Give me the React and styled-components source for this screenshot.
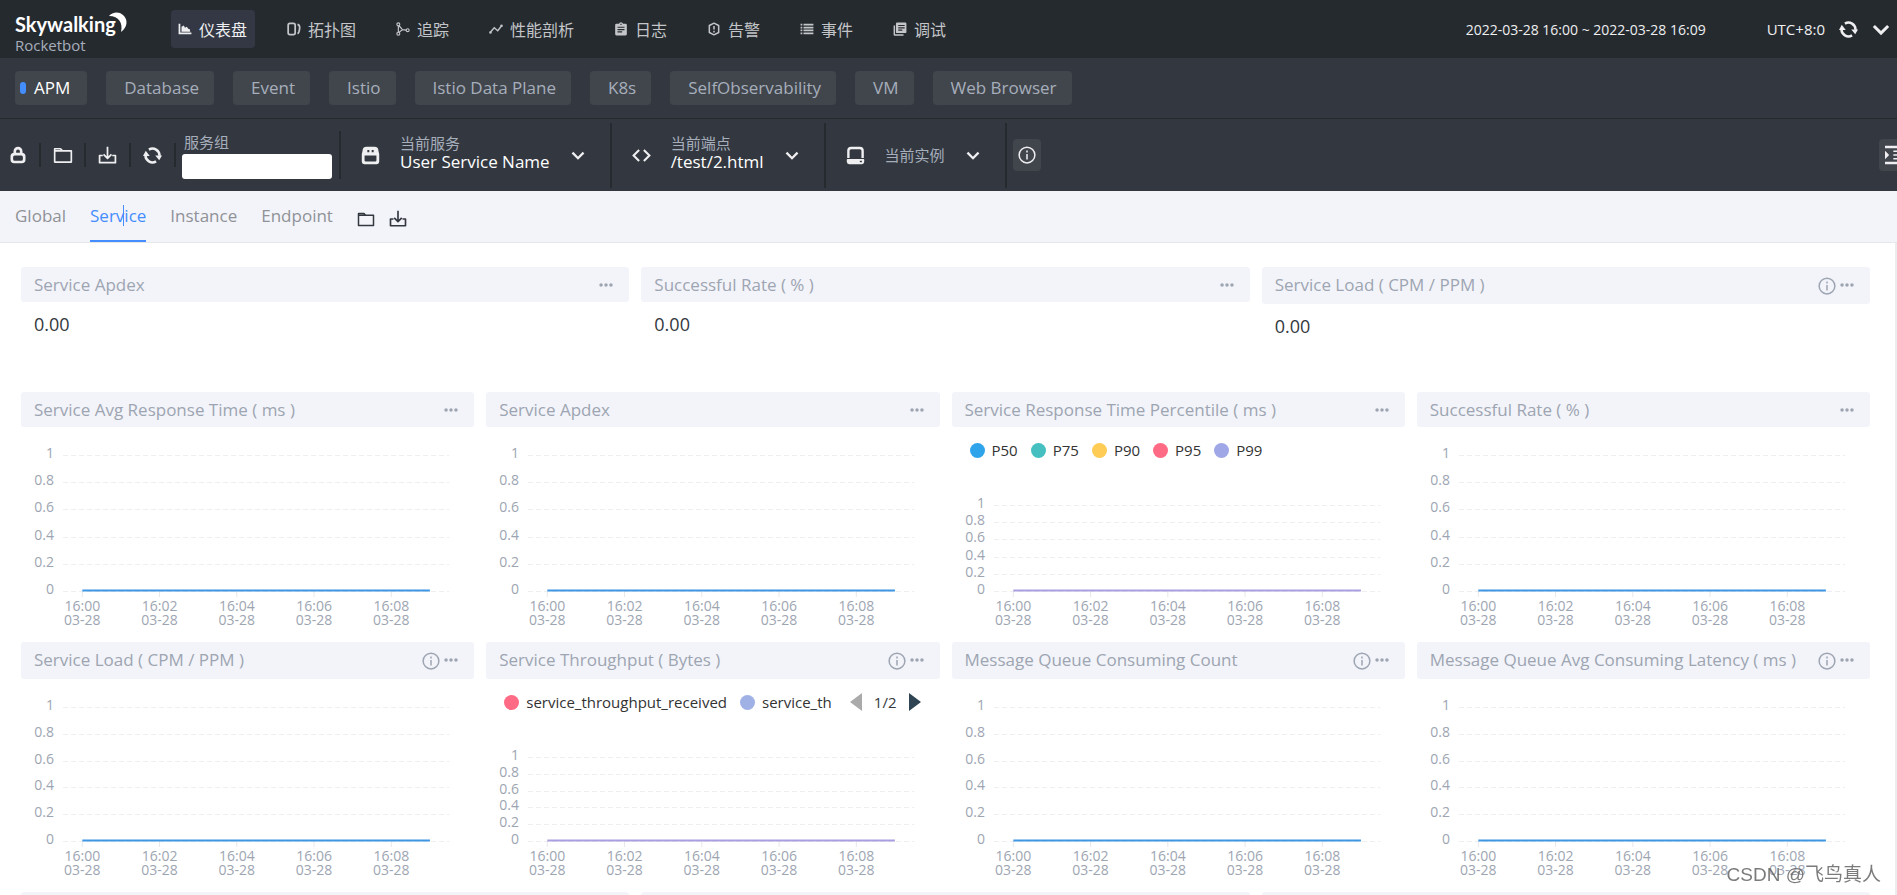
import React, { useState } from 'react'
import styled, { createGlobalStyle, css } from 'styled-components'

const GlobalStyle = createGlobalStyle`
  * {
    box-sizing: border-box;
  }

  body {
    margin: 0;
    background: #fff;
    color: #333840;
    font-family: 'Open Sans', 'Noto Sans CJK SC', sans-serif;
    font-size: 15px;
  }

  button,
  input {
    font: inherit;
    color: inherit;
    border: 0;
    padding: 0;
    background: none;
  }

  button {
    cursor: pointer;
  }

  svg {
    display: block;
    flex: none;
  }
`

/* ---------- icons ---------- */

const iconPaths = {
  chart: (
    <path d="M1 3h3v15h19v3H1zM6 8l4-2 2 4 3-2 3 4 2 0 1 4.500H6z" fill="currentColor" />
  ),
  topology: (
    <g fill="none" stroke="currentColor" strokeWidth="3">
      <rect x="2" y="2.500" width="12" height="19" rx="3" />
      <path d="M18 4c4 1 4 5 3.500 8-.3 4-1 7-3.500 8" />
    </g>
  ),
  trace: (
    <g fill="none" stroke="currentColor" strokeWidth="2">
      <circle cx="4" cy="4" r="2.500" />
      <circle cx="4" cy="20" r="2.500" />
      <circle cx="20" cy="14" r="2.500" />
      <path d="M4 6.500v11M5 6l6 7 6.500 1M5 18l6-5" />
    </g>
  ),
  profile: (
    <g fill="none" stroke="currentColor" strokeWidth="2.400">
      <path d="m2 18 7-8 6 5 7-9" />
      <circle cx="2.500" cy="18" r="1" />
      <circle cx="21.500" cy="6.500" r="1" />
    </g>
  ),
  log: (
    <path
      fillRule="evenodd"
      fill="currentColor"
      d="M4 3h4.500a3.600 3.600 0 0 1 7 0H20a2 2 0 0 1 2 2v16a2 2 0 0 1-2 2H4a2 2 0 0 1-2-2V5a2 2 0 0 1 2-2zm2 5v2h12V8zm0 4v2h12v-2zm0 4v2h8v-2zM11 3v2h2V3z"
    />
  ),
  alarm: (
    <g fill="none" stroke="currentColor" strokeWidth="2.600">
      <path d="m12 2 8 4v12l-8 4-8-4V6z" strokeLinejoin="round" />
      <path d="M12 7v6M12 15v3" />
    </g>
  ),
  event: (
    <path
      fill="currentColor"
      d="M1 3h3v3H1zm5 0h17v3H6zM1 8h3v3H1zm5 0h17v3H6zM1 13h3v3H1zm5 0h17v3H6zM1 18h3v3H1zm5 0h17v3H6z"
    />
  ),
  debug: (
    <path
      fillRule="evenodd"
      fill="currentColor"
      d="M1 6h2.500v15H18v2.500H3a2 2 0 0 1-2-2zM7 1h14a2 2 0 0 1 2 2v14a2 2 0 0 1-2 2H7a2 2 0 0 1-2-2V3a2 2 0 0 1 2-2zm2 4v2h11V5zm0 4v2h11V9zm0 4v2h7v-2z"
    />
  ),
  lock: (
    <path
      fillRule="evenodd"
      fill="currentColor"
      d="M12 1a6 6 0 0 1 6 6v2a5 5 0 0 1 4 5v4a5 5 0 0 1-5 5H7a5 5 0 0 1-5-5v-4a5 5 0 0 1 4-5V7a6 6 0 0 1 6-6zm0 3.500A2.500 2.500 0 0 0 9.500 7v2h5V7A2.500 2.500 0 0 0 12 4.500zM7.500 12.500A2 2 0 0 0 5.500 14.500v3a2 2 0 0 0 2 2h9a2 2 0 0 0 2-2v-3a2 2 0 0 0-2-2z"
    />
  ),
  folder: (
    <path
      d="M2 4.500h7l2.500 2.500H22v13.500H2zM2 7h10"
      fill="none"
      stroke="currentColor"
      strokeWidth="2"
      strokeLinejoin="round"
    />
  ),
  download: (
    <path
      d="M6 12H2v9h20v-9h-4M12 1v14M7 10.500l5 5 5-5"
      fill="none"
      stroke="currentColor"
      strokeWidth="2.200"
      strokeLinejoin="round"
    />
  ),
  refresh: (
    <g>
      <g fill="none" stroke="currentColor" strokeWidth="3.200">
        <path d="M7.500 4.500a8.800 8.800 0 0 1 13.300 8" />
        <path d="M16.500 19.500a8.800 8.800 0 0 1-13.300-8" />
      </g>
      <path d="M15.500 12h8.500l-3.500 6zM0 12.500h8.500L3.500 6z" fill="currentColor" />
    </g>
  ),
  chevron: (
    <path d="m2.500 8 9.500 9.500L21.500 8" fill="none" stroke="currentColor" strokeWidth="4" />
  ),
  service: (
    <path
      fillRule="evenodd"
      fill="currentColor"
      d="M7 1h10a5 5 0 0 1 5 5l1 4v10a3 3 0 0 1-3 3H4a3 3 0 0 1-3-3V10l1-4a5 5 0 0 1 5-5zm1 4v3h2.500V5zm5.500 0v3H16V5zM4.500 12v6a1.500 1.500 0 0 0 1.500 1.500h12a1.500 1.500 0 0 0 1.500-1.500v-6z"
    />
  ),
  code: (
    <path
      d="M9 5l-7 7 7 7M15 5l7 7-7 7"
      fill="none"
      stroke="currentColor"
      strokeWidth="2.600"
    />
  ),
  device: (
    <g>
      <path
        d="M3 15V6a3.500 3.500 0 0 1 3.500-3.500h11A3.500 3.500 0 0 1 21 6v9"
        fill="none"
        stroke="currentColor"
        strokeWidth="3"
      />
      <path
        fillRule="evenodd"
        fill="currentColor"
        d="M2 16.500h20a1 1 0 0 1 1 1V20a3 3 0 0 1-3 3H4a3 3 0 0 1-3-3v-2.500a1 1 0 0 1 1-1zM17.500 18.500v2H20v-2z"
      />
    </g>
  ),
  info: (
    <g>
      <circle cx="12" cy="12" r="10.500" fill="none" stroke="currentColor" strokeWidth="2" />
      <path d="M11 6h2v2.500h-2zm0 4.500h2V18h-2z" fill="currentColor" />
    </g>
  ),
  indent: (
    <path
      fill="currentColor"
      d="M0 1h24v3H0zm0 19h24v3H0zM0 7l5 5-5 5zM10 6.500h14v2H10zm0 4.500h14v2H10zm0 4.500h14v2H10z"
    />
  ),
  more: (
    <g fill="currentColor">
      <circle cx="3.500" cy="12" r="3" />
      <circle cx="12" cy="12" r="3" />
      <circle cx="20.500" cy="12" r="3" />
    </g>
  ),
}

function Icon({ name, size = 18 }) {
  return (
    <svg width={size} height={size} viewBox="0 0 24 24" aria-hidden="true">
      {iconPaths[name]}
    </svg>
  )
}

/* ---------- layout ---------- */

const Page = styled.div`
  height: 100vh;
  display: flex;
  flex-direction: column;
  overflow: hidden;
`

const Header = styled.header`
  flex: none;
  display: flex;
  align-items: center;
  height: 58px;
  padding: 0 7px 0 15px;
  background: #252a2f;
  color: #efeff1;
`

const Logo = styled.a`
  display: block;
  width: 156px;
  color: #fff;
  text-decoration: none;
`

const Product = styled.div`
  font-size: 15px;
  line-height: 16px;
  color: #a7aebb;
`

const Nav = styled.nav`
  display: flex;
  gap: 25px;
`

const NavItem = styled.a`
  display: flex;
  align-items: center;
  gap: 7px;
  height: 38px;
  padding: 0 8px 0 7px;
  border-radius: 4px;
  font-size: 16px;
  text-decoration: none;
  color: ${({ $active }) => ($active ? '#efeff1' : '#c3c5c8')};
  background: ${({ $active }) => ($active ? '#333844' : 'none')};
`

const HeaderTools = styled.div`
  display: flex;
  align-items: center;
  margin-left: auto;
  font-size: 15px;
  white-space: nowrap;
`

const DateRange = styled.button`
  margin-right: 61px;
  font-size: 14px;
`

const HeaderButton = styled.button`
  display: flex;
  margin-left: 14px;
`

const Categories = styled.div`
  flex: none;
  display: flex;
  align-items: center;
  gap: 19px;
  height: 61px;
  padding: 0 15px;
  background: #333840;
  border-bottom: 1px solid #252a2f;
`

const Category = styled.button`
  display: flex;
  align-items: center;
  height: 34px;
  padding: ${({ $active }) => ($active ? '0 17px 0 5px' : '0 15px 0 18px')};
  border-radius: 4px;
  font-size: 17px;
  line-height: 22px;
  white-space: nowrap;
  color: ${({ $active }) => ($active ? '#fff' : '#a7aebb')};
  background: #41464d;

  ${({ $active }) =>
    $active &&
    css`
      &::before {
        content: '';
        width: 6px;
        height: 12px;
        margin-right: 8px;
        border-radius: 3px;
        background: #448dfe;
      }
    `}
`

const Toolbar = styled.div`
  flex: none;
  display: flex;
  align-items: center;
  height: 72px;
  overflow: hidden;
  background: #333840;
  color: #efeff1;
`

const Tool = styled.button`
  display: flex;
  align-items: center;
  justify-content: center;
  width: 45px;
  height: 24px;
  border-right: 2px solid #252a2f;

  &:first-child {
    width: 41px;
    padding-right: 4px;
  }
`

const Group = styled.div`
  display: flex;
  flex-direction: column;
  height: 48px;
  padding: 0 7px 0 6px;
  border-right: 2px solid #252a2f;
`

const GroupLabel = styled.label`
  padding-left: 2px;
  font-size: 15px;
  line-height: 23px;
  color: #a7aebb;
`

const GroupInput = styled.input`
  width: 150px;
  height: 25px;
  border-radius: 3px;
  background: #fff;
  color: #333840;
`

const Selector = styled.button`
  display: flex;
  align-items: center;
  height: 65px;
  padding: 0 25px 0 20px;
  border-right: 2px solid #252a2f;
  text-align: left;
  white-space: nowrap;
`

const SelectorText = styled.span`
  margin: 0 21px 0 20px;
`

const SelectorLabel = styled.span`
  display: block;
  font-size: 15px;
  line-height: 18px;
  color: #a7aebb;
`

const SelectorValue = styled.span`
  display: block;
  padding-bottom: 4px;
  font-size: 17px;
  line-height: 20px;
  color: #fff;
`

const SquareButton = styled.button`
  flex: none;
  display: flex;
  align-items: center;
  justify-content: center;
  width: 28px;
  height: 32px;
  margin-left: 6px;
  border-radius: 4px;
  background: #41464d;
`

const SettingsButton = styled(SquareButton)`
  margin-left: auto;
  margin-right: -14px;
  width: 32px;
`

const Tabs = styled.div`
  flex: none;
  display: flex;
  gap: 24px;
  height: 52px;
  padding: 0 15px;
  background: #f3f4f9;
  border-bottom: 1px solid #e6e7ea;
`

const Tab = styled.button`
  position: relative;
  height: 51px;
  font-size: 17px;
  color: ${({ $active }) => ($active ? '#448dfe' : '#8f9297')};
  border-bottom: 2px solid ${({ $active }) => ($active ? '#448dfe' : 'transparent')};
`

const Caret = styled.span`
  position: absolute;
  top: 14px;
  left: 33px;
  width: 1px;
  height: 21px;
  background: #448dfe;
`

const TabTools = styled.div`
  display: flex;
  align-items: center;
  gap: 14px;
  padding-top: 4px;
  color: #333840;
`

const TabTool = styled.button`
  display: flex;
`

const Content = styled.main`
  flex: 1;
  min-height: 0;
  overflow: hidden;
  padding: 24px 25px 0 21px;
  border-right: 2px solid #ececee;
`

const Row = styled.div`
  display: grid;
  grid-template-columns: repeat(${({ $columns }) => $columns}, 1fr);
  gap: 12px;
  height: ${({ $short }) => ($short ? '125px' : '250px')};
`

const Panel = styled.section`
  min-width: 0;
`

const PanelHeader = styled.div`
  display: flex;
  align-items: flex-start;
  gap: 4px;
  height: ${({ $tall }) => ($tall ? '37px' : '35px')};
  padding: 0 16px 0 13px;
  border-radius: 3px;
  background: #f3f4f9;
  color: #9da5b2;
`

const PanelTitle = styled.h2`
  flex: 1;
  margin: 0;
  font-size: 17px;
  font-weight: 400;
  line-height: 35px;
  white-space: nowrap;
`

const PanelButton = styled.button`
  display: flex;
  align-items: center;
  height: ${({ $tall }) => ($tall ? '37px' : '35px')};
`

const Value = styled.div`
  padding: 9px 13px;
  font-size: 18px;
  line-height: 26px;
`

/* ---------- charts ---------- */

const ChartBox = styled.div`
  padding: ${({ $legend }) => ($legend ? '0' : '28px')} 25px 0 42px;
`

const Plot = styled.svg`
  width: 100%;
  overflow: visible;
  font-size: 14px;
  fill: #9da5b2;
`

const Legend = styled.div`
  display: flex;
  height: 78px;
  margin: 0 -6px 0 -24px;
  padding-top: 14px;
  gap: 13px;
  font-size: 15px;
  line-height: 18px;
`

const LegendItem = styled.button`
  display: flex;
  align-items: center;
  height: 18px;
  gap: 7px;
  color: #333;

  &::before {
    content: '';
    width: 15px;
    height: 15px;
    border-radius: 50%;
    background: ${({ $color }) => $color};
  }
`

const Pager = styled.div`
  display: flex;
  align-items: center;
  gap: 12px;
  height: 18px;
  margin-left: auto;
`

const PagerButton = styled.button`
  display: flex;
  color: ${({ $next }) => ($next ? '#2f4554' : '#aaa')};
`

const Watermark = styled.div`
  position: fixed;
  right: 16px;
  bottom: 8px;
  font-family: 'Liberation Sans', 'Noto Sans CJK SC', sans-serif;
  font-size: 19px;
  line-height: 24px;
  color: rgba(90, 90, 90, 0.8);
`

const navItems = [
  { label: '仪表盘', icon: 'chart' },
  { label: '拓扑图', icon: 'topology' },
  { label: '追踪', icon: 'trace' },
  { label: '性能剖析', icon: 'profile' },
  { label: '日志', icon: 'log' },
  { label: '告警', icon: 'alarm' },
  { label: '事件', icon: 'event' },
  { label: '调试', icon: 'debug' },
]

const categories = [
  'APM',
  'Database',
  'Event',
  'Istio',
  'Istio Data Plane',
  'K8s',
  'SelfObservability',
  'VM',
  'Web Browser',
]

const tabs = ['Global', 'Service', 'Instance', 'Endpoint']

const values = [
  { title: 'Service Apdex', value: '0.00' },
  { title: 'Successful Rate ( % )', value: '0.00' },
  { title: 'Service Load ( CPM / PPM )', value: '0.00', info: true },
]

const percentiles = [
  { name: 'P50', color: '#30a4eb' },
  { name: 'P75', color: '#45bfc0' },
  { name: 'P90', color: '#ffcc55' },
  { name: 'P95', color: '#ff6a84' },
  { name: 'P99', color: '#a0a7e6' },
]

const throughput = [
  { name: 'service_throughput_received', color: '#ff6a84' },
  { name: 'service_th', color: '#a0b1e6' },
]

const chartRows = [
  [
    { title: 'Service Avg Response Time ( ms )' },
    { title: 'Service Apdex' },
    { title: 'Service Response Time Percentile ( ms )', legend: percentiles },
    { title: 'Successful Rate ( % )' },
  ],
  [
    { title: 'Service Load ( CPM / PPM )', info: true },
    { title: 'Service Throughput ( Bytes )', info: true, legend: throughput, pages: '1/2' },
    { title: 'Message Queue Consuming Count', info: true },
    { title: 'Message Queue Avg Consuming Latency ( ms )', info: true },
  ],
]

const yTicks = ['1', '0.8', '0.6', '0.4', '0.2', '0']
const xTicks = ['16:00', '16:02', '16:04', '16:06', '16:08']

function Chart({ legend, pages, height }) {
  const plotHeight = legend ? height - 50 : height
  const color = legend ? '#a99fe0' : '#3f96e3'

  return (
    <ChartBox $legend={legend}>
      {legend && (
        <Legend>
          {legend.map(item => (
            <LegendItem key={item.name} type="button" $color={item.color}>
              {item.name}
            </LegendItem>
          ))}
          {pages && (
            <Pager>
              <PagerButton type="button" aria-label="Previous">
                <svg width="12" height="18" viewBox="0 0 12 18">
                  <path d="M12 0v18L0 9z" fill="currentColor" />
                </svg>
              </PagerButton>
              {pages}
              <PagerButton type="button" aria-label="Next" $next>
                <svg width="12" height="18" viewBox="0 0 12 18">
                  <path d="M0 0v18l12-9z" fill="currentColor" />
                </svg>
              </PagerButton>
            </Pager>
          )}
        </Legend>
      )}
      <Plot height={plotHeight + 50}>
        {yTicks.map((tick, i) => {
          const y = Math.round((plotHeight * i) / 5)
          return (
            <g key={tick}>
              <line
                x1="0"
                x2="100%"
                y1={y + 0.5}
                y2={y + 0.5}
                stroke="#eeeff1"
                strokeDasharray="5 3"
              />
              <text x="-9" y={y + 3} textAnchor="end">
                {tick}
              </text>
            </g>
          )
        })}
        {xTicks.map((tick, i) => {
          const x = `${5 + i * 20}%`
          return (
            <g key={tick} textAnchor="middle">
              <line x1={x} x2={x} y1={plotHeight} y2={plotHeight + 6} stroke="#e6e8ec" />
              <text y={plotHeight + 20}>
                <tspan x={x}>{tick}</tspan>
                <tspan x={x} dy="14">
                  03-28
                </tspan>
              </text>
            </g>
          )
        })}
        <line
          x1="5%"
          x2="95%"
          y1={plotHeight - 0.5}
          y2={plotHeight - 0.5}
          stroke={color}
          strokeWidth="2"
        />
      </Plot>
    </ChartBox>
  )
}

function PanelTop({ title, info }) {
  return (
    <PanelHeader $tall={info}>
      <PanelTitle>{title}</PanelTitle>
      {info && (
        <PanelButton type="button" aria-label="Info" $tall>
          <Icon name="info" />
        </PanelButton>
      )}
      <PanelButton type="button" aria-label="More">
        <Icon name="more" size={14} />
      </PanelButton>
    </PanelHeader>
  )
}

export default function App() {
  const [category, setCategory] = useState('APM')
  const [tab, setTab] = useState('Service')

  return (
    <>
      <GlobalStyle />
      <Page>
        <Header>
          <Logo href="#">
            <svg width="116" height="32" viewBox="0 0 116 32">
              <text
                x="0"
                y="27"
                fontFamily="Lato, sans-serif"
                fontSize="20"
                fontWeight="700"
                fill="currentColor"
              >
                Skywalking
              </text>
              <path
                d="M94 11c3-4 10-5 14-1 5 4 5 12-2 17 2-9-2-16-12-16z"
                fill="currentColor"
              />
            </svg>
            <Product>Rocketbot</Product>
          </Logo>
          <Nav>
            {navItems.map((item, i) => (
              <NavItem key={item.label} href="#" $active={i === 0}>
                <Icon name={item.icon} size={14} />
                {item.label}
              </NavItem>
            ))}
          </Nav>
          <HeaderTools>
            <DateRange type="button">2022-03-28 16:00 ~ 2022-03-28 16:09</DateRange>
            <span>UTC+8:0</span>
            <HeaderButton type="button" aria-label="Refresh">
              <Icon name="refresh" size={19} />
            </HeaderButton>
            <HeaderButton type="button" aria-label="Expand">
              <Icon name="chevron" size={18} />
            </HeaderButton>
          </HeaderTools>
        </Header>

        <Categories>
          {categories.map(name => (
            <Category
              key={name}
              type="button"
              $active={name === category}
              onClick={() => setCategory(name)}
            >
              {name}
            </Category>
          ))}
        </Categories>

        <Toolbar>
          <Tool type="button" aria-label="Lock">
            <Icon name="lock" />
          </Tool>
          <Tool type="button" aria-label="Open">
            <Icon name="folder" size={20} />
          </Tool>
          <Tool type="button" aria-label="Download">
            <Icon name="download" size={19} />
          </Tool>
          <Tool type="button" aria-label="Reload">
            <Icon name="refresh" size={19} />
          </Tool>
          <Group>
            <GroupLabel htmlFor="group">服务组</GroupLabel>
            <GroupInput id="group" type="text" />
          </Group>
          <Selector type="button">
            <Icon name="service" size={19} />
            <SelectorText>
              <SelectorLabel>当前服务</SelectorLabel>
              <SelectorValue>User Service Name</SelectorValue>
            </SelectorText>
            <Icon name="chevron" size={14} />
          </Selector>
          <Selector type="button">
            <Icon name="code" size={19} />
            <SelectorText>
              <SelectorLabel>当前端点</SelectorLabel>
              <SelectorValue>/test/2.html</SelectorValue>
            </SelectorText>
            <Icon name="chevron" size={14} />
          </Selector>
          <Selector type="button">
            <Icon name="device" size={19} />
            <SelectorText>
              <SelectorLabel>当前实例</SelectorLabel>
            </SelectorText>
            <Icon name="chevron" size={14} />
          </Selector>
          <SquareButton type="button" aria-label="Info">
            <Icon name="info" />
          </SquareButton>
          <SettingsButton type="button" aria-label="Settings">
            <Icon name="indent" size={20} />
          </SettingsButton>
        </Toolbar>

        <Tabs>
          {tabs.map(name => (
            <Tab key={name} type="button" $active={name === tab} onClick={() => setTab(name)}>
              {name}
              {name === tab && <Caret />}
            </Tab>
          ))}
          <TabTools>
            <TabTool type="button" aria-label="Open">
              <Icon name="folder" />
            </TabTool>
            <TabTool type="button" aria-label="Download">
              <Icon name="download" />
            </TabTool>
          </TabTools>
        </Tabs>

        <Content>
          <Row $columns={3} $short>
            {values.map(item => (
              <Panel key={item.title}>
                <PanelTop title={item.title} info={item.info} />
                <Value>{item.value}</Value>
              </Panel>
            ))}
          </Row>
          {chartRows.map((row, i) => (
            <Row key={i} $columns={4}>
              {row.map(item => (
                <Panel key={item.title}>
                  <PanelTop title={item.title} info={item.info} />
                  <Chart
                    legend={item.legend}
                    pages={item.pages}
                    height={item.info ? 134 : 136}
                  />
                </Panel>
              ))}
            </Row>
          ))}
          <Row $columns={3}>
            <PanelHeader />
            <PanelHeader />
            <PanelHeader />
          </Row>
        </Content>
      </Page>
      <Watermark>CSDN @飞鸟真人</Watermark>
    </>
  )
}
